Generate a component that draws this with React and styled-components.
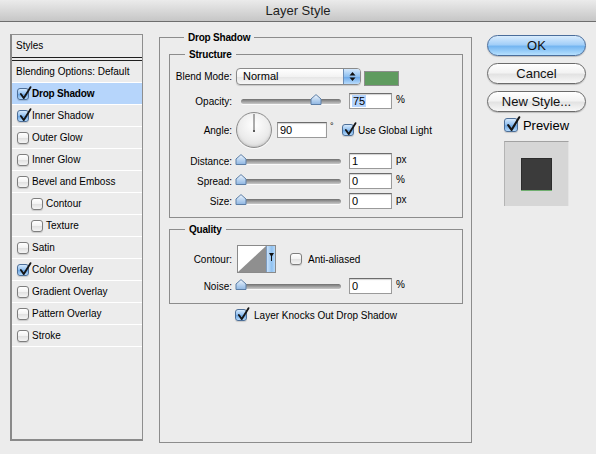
import React from "react"
import styled, { createGlobalStyle } from "styled-components"

const GlobalStyle = createGlobalStyle`
  html, body {
    margin: 0;
    padding: 0;
  }
  body {
    background: #ececec;
    font-family: "Liberation Sans", Arial, sans-serif;
    font-size: 10px;
    color: #000;
  }
`

const Window = styled.div`
  width: 596px;
  height: 454px;
  background: #ececec;
  overflow: hidden;
`

const TitleBar = styled.div`
  height: 21px;
  border-bottom: 1px solid #6e6e6e;
  background: linear-gradient(#ebebeb, #c6c6c6);
  display: flex;
  align-items: center;
  justify-content: center;
  font-size: 13px;
  color: #1e1e1e;
`

const Body = styled.div`
  display: flex;
  align-items: flex-start;
  padding: 12px 10px 0 10px;
`

/* ---- styles list ---- */

const StylesList = styled.div`
  width: 133px;
  height: 407px;
  flex: none;
  box-sizing: border-box;
  border: 1px solid #8e8e8e;
  border-left: 2px solid #8a8a8a;
  border-bottom: 2px solid #8a8a8a;
`

const ListHeader = styled.div`
  height: 22px;
  line-height: 22px;
  padding-left: 4px;
  border-bottom: 4px double #1f1f1f;
`

const ListRow = styled.div`
  height: 21px;
  display: flex;
  align-items: center;
  gap: 3px;
  padding-left: ${p => p.$indent}px;
  border-bottom: 1px solid #fff;
  background: ${p => (p.$selected ? "#b6d5fb" : "transparent")};
  font-weight: ${p => (p.$selected ? "bold" : "normal")};
  letter-spacing: ${p => (p.$selected ? "-0.2px" : "0")};
`

/* ---- checkbox ---- */

const Box = styled.span`
  position: relative;
  flex: none;
  width: ${p => p.$size}px;
  height: ${p => p.$size}px;
  box-sizing: border-box;
  border-radius: 3px;
  border: 1px solid ${p => (p.$checked ? "#4d6f98" : "#7e7e7e")};
  background: ${p =>
    p.$checked
      ? "linear-gradient(#d6eafd, #8dbdee 50%, #6fa8e4 55%, #b4dafd)"
      : "linear-gradient(#ffffff, #f2f2f2 50%, #e2e2e2 55%, #f4f4f4)"};
  box-shadow: 0 1px 1px rgba(0, 0, 0, 0.15);
`

const Tick = styled.svg`
  position: absolute;
  left: 1px;
  top: -3px;
  width: ${p => p.$size + 1}px;
  height: ${p => p.$size + 2}px;
  overflow: visible;
`

function Check({ checked, size = 12 }) {
  return (
    <Box $checked={checked} $size={size}>
      {checked && (
        <Tick $size={size} viewBox="0 0 14 15">
          <path d="M2 8.6 L5.2 13 L12.4 1.2" fill="none" stroke="#151515" strokeWidth="2" strokeLinecap="round" strokeLinejoin="round" />
        </Tick>
      )}
    </Box>
  )
}

/* ---- group boxes ---- */

const Group = styled.div`
  box-sizing: border-box;
  flex: none;
  border: 1px solid #8c8c8c;
  margin-top: ${p => p.$top || 0}px;
  margin-left: ${p => p.$left || 0}px;
  padding: 0 ${p => p.$padR || 0}px ${p => p.$padB || 0}px ${p => p.$padL || 0}px;
  ${p => (p.$height ? `height: ${p.$height}px;` : "")}
  ${p => (p.$width ? `width: ${p.$width}px;` : "")}
`

const GroupTitle = styled.div`
  width: fit-content;
  margin: -7px 0 0 15px;
  padding: 0 4px;
  background: #ececec;
  font-weight: bold;
  line-height: 13px;
  letter-spacing: -0.2px;
`

const Row = styled.div`
  display: flex;
  align-items: center;
  height: ${p => p.$h}px;
  margin-top: ${p => p.$top}px;
  justify-content: ${p => (p.$center ? "center" : "flex-start")};
`

const Label = styled.span`
  width: 62px;
  flex: none;
  text-align: right;
`

const Unit = styled.span`
  margin-left: 4px;
  margin-top: -3px;
`

const Field = styled.div`
  width: ${p => p.$w}px;
  height: 16px;
  box-sizing: border-box;
  margin-left: ${p => p.$ml}px;
  border: 1px solid #9a9a9a;
  border-top-color: #6c6c6c;
  background: #fff;
  box-shadow: inset 0 1px 1px rgba(0, 0, 0, 0.18);
  font-size: 11px;
  line-height: 14px;
  padding-left: 2px;
`

const Selected = styled.span`
  background: #b5d5ff;
  padding: 0 1px;
`

/* ---- popup menu ---- */

const Popup = styled.div`
  margin-left: 4px;
  width: 125px;
  height: 17px;
  box-sizing: border-box;
  display: flex;
  border: 1px solid #8a8a8a;
  border-radius: 4px;
  overflow: hidden;
  background: linear-gradient(#ffffff, #f3f3f3 50%, #e6e6e6 55%, #f7f7f7);
  box-shadow: 0 1px 1px rgba(0, 0, 0, 0.15);
`

const PopupText = styled.span`
  flex: 1;
  font-size: 11px;
  line-height: 15px;
  padding-left: 6px;
`

const PopupArrows = styled.span`
  width: 16px;
  display: flex;
  align-items: center;
  justify-content: center;
  border-left: 1px solid #6c8db5;
  background: linear-gradient(#d4e8fc, #8ec0f0 50%, #6eaaea 55%, #b9dcfc);
`

const Swatch = styled.div`
  margin-left: 3px;
  align-self: flex-start;
  margin-top: 3px;
  width: 35px;
  height: 15px;
  box-sizing: border-box;
  background: #5f9b5f;
  border: 1px solid #8e8e8e;
`

/* ---- slider ---- */

const Track = styled.div`
  position: relative;
  margin-left: 9px;
  width: 100px;
  height: 5px;
  border-radius: 3px;
  background: linear-gradient(#6f6f6f, #9d9d9d 50%, #c9c9c9);
  box-shadow: 0 1px 0 #fafafa;
`

const Knob = styled.svg`
  position: absolute;
  top: -5px;
  width: 12px;
  height: 11px;
  margin-left: -6px;
`

function Slider({ value }) {
  return (
    <Track>
      <Knob viewBox="0 0 12 11" style={{ left: `${value}%` }}>
        <defs>
          <linearGradient id="knobFill" x1="0" y1="0" x2="0" y2="1">
            <stop offset="0" stopColor="#f2f7fd" />
            <stop offset="0.55" stopColor="#b7d2ef" />
            <stop offset="1" stopColor="#8fb6e2" />
          </linearGradient>
        </defs>
        <path d="M1 10.5 V5 L6 0.6 L11 5 V10.5 Z" fill="url(#knobFill)" stroke="#5c7ea6" strokeWidth="1" strokeLinejoin="round" />
      </Knob>
    </Track>
  )
}

/* ---- angle dial ---- */

const Dial = styled.div`
  margin-left: 4px;
  width: 36px;
  height: 36px;
  box-sizing: border-box;
  border-radius: 50%;
  border: 1px solid #8c8c8c;
  background: radial-gradient(circle at 50% 35%, #ffffff, #ececec 55%, #d2d2d2);
  box-shadow: inset 0 -1px 2px rgba(0, 0, 0, 0.12), 0 1px 1px rgba(255, 255, 255, 0.8);
  display: flex;
`

const Degree = styled.span`
  margin-left: 3px;
  width: 12px;
  align-self: flex-start;
  padding-top: 9px;
  font-size: 9px;
`

const CheckLabel = styled.span`
  margin-left: ${p => p.$gap}px;
  font-size: ${p => p.$size || 10}px;
`

const CheckSlot = styled.span`
  margin-left: ${p => p.$ml || 0}px;
  display: flex;
`

/* ---- contour picker ---- */

const ContourPick = styled.div`
  margin-left: 5px;
  width: 39px;
  height: 28px;
  box-sizing: border-box;
  display: flex;
  border: 1px solid #8a8a8a;
  background: #fff;
`

const ContourArrow = styled.span`
  width: 9px;
  display: flex;
  justify-content: center;
  padding-top: 7px;
  box-sizing: border-box;
  border-left: 1px solid #7d9cc0;
  background: linear-gradient(90deg, #c9e1fa, #8fc1f0 60%, #b7dafb);
`

/* ---- right column ---- */

const Side = styled.div`
  width: 99px;
  flex: none;
  margin-left: 15px;
  margin-top: 1px;
  display: flex;
  flex-direction: column;
  align-items: center;
  gap: 7px;
`

const PushButton = styled.div`
  width: 99px;
  height: 21px;
  box-sizing: border-box;
  border-radius: 11px;
  border: 1px solid ${p => (p.$primary ? "#4a6d9b" : "#6b6b6b")};
  background: ${p =>
    p.$primary
      ? "linear-gradient(#d9ecfd, #a3cff8 45%, #75b6f1 55%, #b6e0fe)"
      : "linear-gradient(#ffffff, #f3f3f3 45%, #e3e3e3 55%, #f8f8f8)"};
  box-shadow: 0 1px 1px rgba(0, 0, 0, 0.2);
  display: flex;
  align-items: center;
  justify-content: center;
  font-size: 13px;
  color: #111;
`

const PreviewRow = styled.div`
  display: flex;
  align-items: center;
  margin-top: -1px;
  height: 14px;
`

const PreviewWell = styled.div`
  margin-top: 2px;
  width: 65px;
  height: 65px;
  box-sizing: border-box;
  background: #d6d6d6;
  border-top: 1px solid #a2a2a2;
  border-left: 1px solid #b4b4b4;
  border-right: 1px solid #e4e4e4;
  display: flex;
  align-items: center;
  justify-content: center;
`

const PreviewSwatch = styled.div`
  width: 31px;
  height: 32px;
  background: #3b3b3b;
  border: 1px solid #2c2c2c;
  border-bottom: none;
  box-sizing: border-box;
  box-shadow: 0 1px 0 #6fae6f;
`

const effects = [
  { name: "Drop Shadow", checked: true, selected: true },
  { name: "Inner Shadow", checked: true },
  { name: "Outer Glow" },
  { name: "Inner Glow" },
  { name: "Bevel and Emboss" },
  { name: "Contour", sub: true },
  { name: "Texture", sub: true },
  { name: "Satin" },
  { name: "Color Overlay", checked: true },
  { name: "Gradient Overlay" },
  { name: "Pattern Overlay" },
  { name: "Stroke" },
]

function SliderRow({ label, value, text, unit, top }) {
  return (
    <Row $h={16} $top={top}>
      <Label>{label}</Label>
      <Slider value={value} />
      <Field $w={43} $ml={8}>{text}</Field>
      <Unit>{unit}</Unit>
    </Row>
  )
}

export default function App() {
  return (
    <Window>
      <GlobalStyle />
      <TitleBar>Layer Style</TitleBar>
      <Body>
        <StylesList>
          <ListHeader>Styles</ListHeader>
          <ListRow $indent={4}>Blending Options: Default</ListRow>
          {effects.map(e => (
            <ListRow key={e.name} $indent={e.sub ? 19 : 5} $selected={e.selected}>
              <Check checked={e.checked} />
              <span>{e.name}</span>
            </ListRow>
          ))}
        </StylesList>

        <Group $top={3} $left={16} $height={406} $width={313} $padL={9} $padR={8}>
          <GroupTitle>Drop Shadow</GroupTitle>

          <Group $top={10} $padB={8}>
            <GroupTitle>Structure</GroupTitle>
            <Row $h={17} $top={7}>
              <Label>Blend Mode:</Label>
              <Popup>
                <PopupText>Normal</PopupText>
                <PopupArrows>
                  <svg width="7" height="11" viewBox="0 0 7 11">
                    <path d="M0.5 4.5 L3.5 1 L6.5 4.5 Z M0.5 6.5 L3.5 10 L6.5 6.5 Z" fill="#111" />
                  </svg>
                </PopupArrows>
              </Popup>
              <Swatch />
            </Row>

            <Row $h={16} $top={8}>
              <Label>Opacity:</Label>
              <Slider value={75} />
              <Field $w={43} $ml={8}><Selected>75</Selected></Field>
              <Unit>%</Unit>
            </Row>

            <Row $h={36} $top={3}>
              <Label>Angle:</Label>
              <Dial>
                <svg width="34" height="34" viewBox="0 0 34 34">
                  <line x1="17" y1="17.5" x2="17" y2="1" stroke="#5a5a5a" strokeWidth="1" />
                  <rect x="16" y="17" width="2" height="2" fill="#5a5a5a" />
                </svg>
              </Dial>
              <Field $w={50} $ml={5}>90</Field>
              <Degree>°</Degree>
              <Check checked />
              <CheckLabel $gap={4}>Use Global Light</CheckLabel>
            </Row>

            <SliderRow label="Distance:" value={0} text="1" unit="px" top={5} />
            <SliderRow label="Spread:" value={0} text="0" unit="%" top={4} />
            <SliderRow label="Size:" value={0} text="0" unit="px" top={4} />
          </Group>

          <Group $top={11} $padB={9}>
            <GroupTitle>Quality</GroupTitle>
            <Row $h={28} $top={9}>
              <Label>Contour:</Label>
              <ContourPick>
                <svg width="28" height="26" viewBox="0 0 28 26">
                  <path d="M0 26 L28 0 L28 26 Z" fill="#8f8f8f" />
                </svg>
                <ContourArrow>
                  <svg width="5" height="8" viewBox="0 0 5 8">
                    <path d="M0 0 H5 L2.5 4 Z" fill="#111" />
                    <rect x="2" y="3" width="1" height="5" fill="#111" />
                  </svg>
                </ContourArrow>
              </ContourPick>
              <CheckSlot $ml={14}><Check /></CheckSlot>
              <CheckLabel $gap={6}>Anti-aliased</CheckLabel>
            </Row>
            <SliderRow label="Noise:" value={0} text="0" unit="%" top={5} />
          </Group>

          <Row $h={14} $top={4} $center>
            <Check checked />
            <CheckLabel $gap={7}>Layer Knocks Out Drop Shadow</CheckLabel>
          </Row>
        </Group>

        <Side>
          <PushButton $primary>OK</PushButton>
          <PushButton>Cancel</PushButton>
          <PushButton>New Style...</PushButton>
          <PreviewRow>
            <Check checked size={14} />
            <CheckLabel $gap={5} $size={13}>Preview</CheckLabel>
          </PreviewRow>
          <PreviewWell>
            <PreviewSwatch />
          </PreviewWell>
        </Side>
      </Body>
    </Window>
  )
}
